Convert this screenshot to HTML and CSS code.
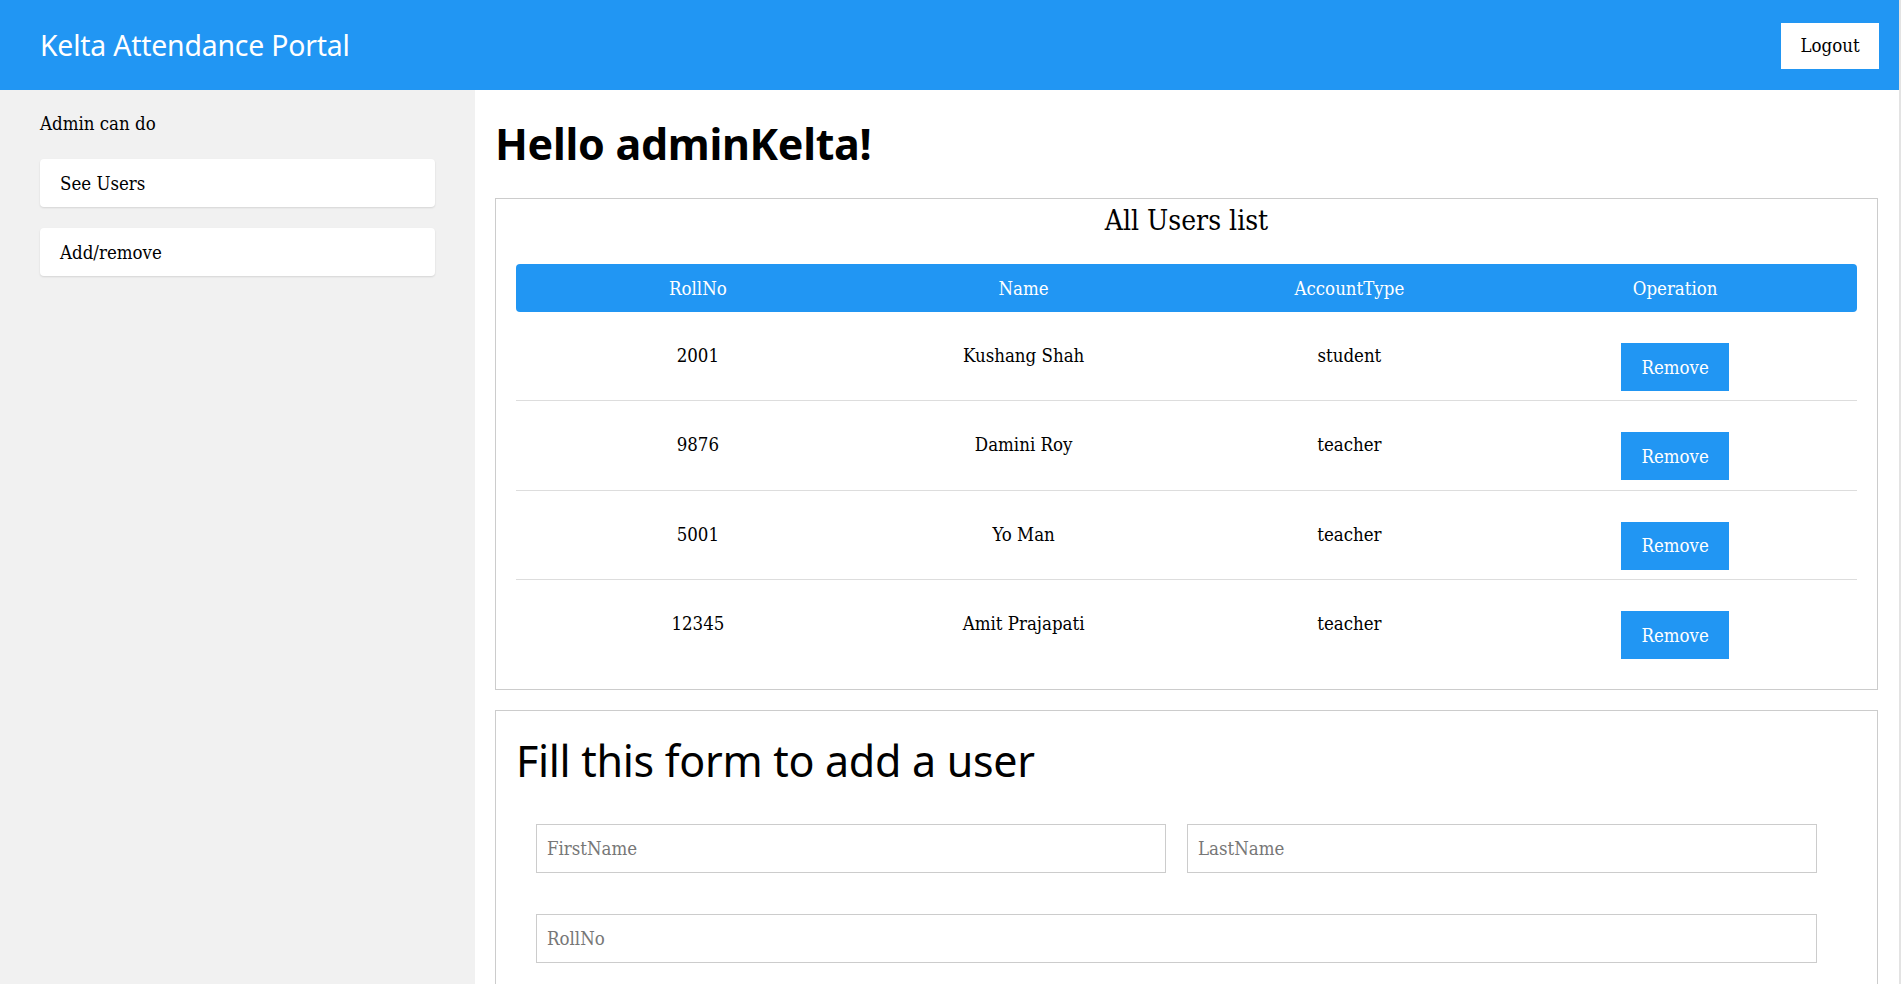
FILE: index.html
```html
<!DOCTYPE html>
<html lang="en">
<head>
<meta charset="utf-8">
<title>Kelta Attendance Portal</title>
<link rel="stylesheet" href="styles.css">
</head>
<body>
<div class="app">
  <header class="topbar">
    <div class="brand">Kelta Attendance Portal</div>
    <button class="logout">Logout</button>
  </header>
  <div class="layout">
    <aside class="sidebar">
      <div class="side-label">Admin can do</div>
      <a class="side-item">See Users</a>
      <a class="side-item">Add/remove</a>
    </aside>
    <main class="main">
      <h1 class="hello">Hello adminKelta!</h1>
      <section class="card users">
        <h2 class="card-title">All Users list</h2>
        <div class="grid head">
          <div>RollNo</div><div>Name</div><div>AccountType</div><div>Operation</div>
        </div>
        <div class="grid row">
          <div class="cell">2001</div><div class="cell">Kushang Shah</div><div class="cell">student</div><div class="cell op"><button class="remove">Remove</button></div>
        </div>
        <div class="grid row">
          <div class="cell">9876</div><div class="cell">Damini Roy</div><div class="cell">teacher</div><div class="cell op"><button class="remove">Remove</button></div>
        </div>
        <div class="grid row">
          <div class="cell">5001</div><div class="cell">Yo Man</div><div class="cell">teacher</div><div class="cell op"><button class="remove">Remove</button></div>
        </div>
        <div class="grid row last">
          <div class="cell">12345</div><div class="cell">Amit Prajapati</div><div class="cell">teacher</div><div class="cell op"><button class="remove">Remove</button></div>
        </div>
      </section>
      <section class="card form-card">
        <h2 class="form-title">Fill this form to add a user</h2>
        <div class="fields">
          <div class="two">
            <input class="field" type="text" placeholder="FirstName">
            <input class="field" type="text" placeholder="LastName">
          </div>
          <input class="field" type="text" placeholder="RollNo">
        </div>
      </section>
    </main>
  </div>
</div>
</body>
</html>
```

FILE: styles.css
```css
html, body {
  margin: 0;
  padding: 0;
  background: #ffffff;
}
body {
  font-family: "DejaVu Serif Condensed", "DejaVu Serif", serif;
  font-size: 18.5px;
  color: #000;
  overflow: hidden;
}
.app {
  width: 1899px;
  min-height: 984px;
  border-right: 2px solid #e3e3e3;
  display: flex;
  flex-direction: column;
}
.topbar {
  height: 90px;
  background: #2196f3;
  display: flex;
  align-items: center;
  justify-content: space-between;
  padding: 0 20px 0 40px;
  box-sizing: border-box;
}
.brand {
  font-family: "Noto Sans", "Open Sans", sans-serif;
  font-size: 28.4px;
  color: #fff;
  letter-spacing: -0.2px;
}
.logout {
  width: 98px;
  height: 46px;
  margin-top: 1px;
  background: #fff;
  border: none;
  font-family: "DejaVu Serif Condensed", serif;
  font-size: 18.5px;
  color: #000;
  padding: 0;
}
.layout {
  flex: 1;
  display: grid;
  grid-template-columns: 475px 1fr;
}
.sidebar {
  background: #f1f1f1;
  padding: 20px 40px;
  display: flex;
  flex-direction: column;
  gap: 21px;
}
.side-label {
  line-height: 27px;
  margin-bottom: 1px;
}
.side-item {
  display: flex;
  align-items: center;
  height: 48px;
  padding: 0 20px;
  background: #fff;
  border-radius: 4px;
  box-shadow: 0 1px 2px rgba(0,0,0,0.12);
}
.main {
  padding: 0 21px 0 20px;
}
.hello {
  font-family: "Noto Sans", "Open Sans", sans-serif;
  font-weight: 700;
  font-size: 43px;
  line-height: 56px;
  margin: 26px 0 26px;
  letter-spacing: -0.3px;
}
.card {
  border: 1px solid #cccccc;
  padding: 0 20px 20px;
}
.card-title {
  font-weight: normal;
  font-size: 28px;
  line-height: 44px;
  margin: 0 0 21px;
  text-align: center;
}
.grid {
  display: grid;
  grid-template-columns: repeat(4, 1fr);
  padding: 0 19px;
  text-align: center;
}
.head {
  background: #2196f3;
  color: #fff;
  height: 48px;
  align-items: center;
  border-radius: 4px;
}
.row {
  height: 88.4px;
  border-bottom: 1px solid #dddddd;
}
.row.last {
  border-bottom: none;
}
.cell {
  padding-top: 33px;
  line-height: 22px;
}
.cell.op {
  padding-top: 31px;
}
.remove {
  width: 108px;
  height: 48px;
  background: #2196f3;
  color: #fff;
  border: none;
  font-family: "DejaVu Serif Condensed", serif;
  font-size: 18.5px;
  padding: 0;
}
.form-card {
  margin-top: 20px;
  padding-top: 26px;
  padding-bottom: 40px;
}
.form-title {
  font-family: "Noto Sans", "Open Sans", sans-serif;
  font-weight: normal;
  font-size: 43px;
  line-height: 48px;
  margin: 0 0 39px;
  letter-spacing: -0.3px;
}
.fields {
  margin: 0 40px 0 20px;
  display: flex;
  flex-direction: column;
  gap: 41px;
}
.two {
  display: grid;
  grid-template-columns: 1fr 1fr;
  gap: 21px;
}
.field {
  height: 49px;
  box-sizing: border-box;
  border: 1px solid #cccccc;
  padding: 0 10px;
  font-family: "DejaVu Serif Condensed", serif;
  font-size: 18.5px;
  width: 100%;
  outline: none;
}
.field::placeholder {
  color: #777;
}
```
